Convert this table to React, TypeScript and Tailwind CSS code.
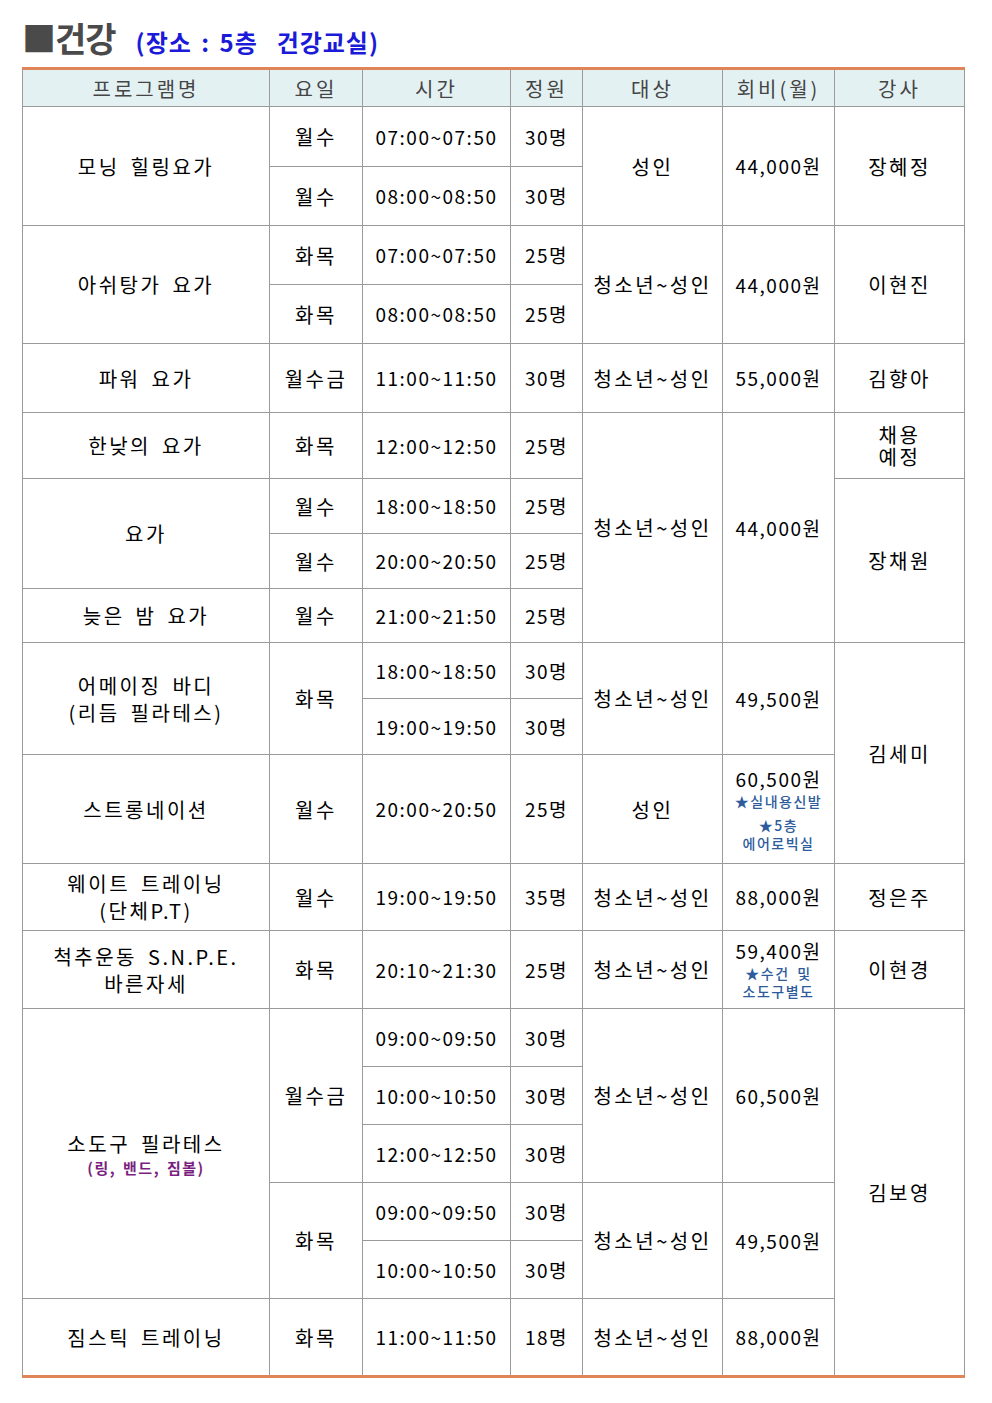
import React from "react";

type Cell = {
  text: React.ReactNode;
  rs?: number;
};

const td = "border border-[#9a9a9a] text-center align-middle px-1 leading-[1.35]";
const ko = "text-[20px] tracking-[2.5px] [word-spacing:4px]";

function Note({ children }: { children: React.ReactNode }) {
  return (
    <div className="text-[14px] leading-[1.3] text-[#2d5b9c] font-medium tracking-[1.5px] [word-spacing:3px]">
      {children}
    </div>
  );
}

const rows: { h: number; cells: Cell[] }[] = [
  {
    h: 60,
    cells: [
      { text: "모닝 힐링요가", rs: 2 },
      { text: "월수" },
      { text: "07:00~07:50" },
      { text: "30명" },
      { text: "성인", rs: 2 },
      { text: "44,000원", rs: 2 },
      { text: "장혜정", rs: 2 },
    ],
  },
  { h: 59, cells: [{ text: "월수" }, { text: "08:00~08:50" }, { text: "30명" }] },
  {
    h: 59,
    cells: [
      { text: "아쉬탕가 요가", rs: 2 },
      { text: "화목" },
      { text: "07:00~07:50" },
      { text: "25명" },
      { text: "청소년~성인", rs: 2 },
      { text: "44,000원", rs: 2 },
      { text: "이현진", rs: 2 },
    ],
  },
  { h: 59, cells: [{ text: "화목" }, { text: "08:00~08:50" }, { text: "25명" }] },
  {
    h: 69,
    cells: [
      { text: "파워 요가" },
      { text: "월수금" },
      { text: "11:00~11:50" },
      { text: "30명" },
      { text: "청소년~성인" },
      { text: "55,000원" },
      { text: "김향아" },
    ],
  },
  {
    h: 66,
    cells: [
      { text: "한낮의 요가" },
      { text: "화목" },
      { text: "12:00~12:50" },
      { text: "25명" },
      { text: "청소년~성인", rs: 4 },
      { text: "44,000원", rs: 4 },
      {
        text: (
          <div className={`${ko} leading-[22px]`}>
            <div>채용</div>
            <div>예정</div>
          </div>
        ),
      },
    ],
  },
  {
    h: 55,
    cells: [
      { text: "요가", rs: 2 },
      { text: "월수" },
      { text: "18:00~18:50" },
      { text: "25명" },
      { text: "장채원", rs: 3 },
    ],
  },
  { h: 55, cells: [{ text: "월수" }, { text: "20:00~20:50" }, { text: "25명" }] },
  { h: 54, cells: [{ text: "늦은 밤 요가" }, { text: "월수" }, { text: "21:00~21:50" }, { text: "25명" }] },
  {
    h: 56,
    cells: [
      { text: <div className={ko}>어메이징 바디<br />(리듬 필라테스)</div>, rs: 2 },
      { text: "화목", rs: 2 },
      { text: "18:00~18:50" },
      { text: "30명" },
      { text: "청소년~성인", rs: 2 },
      { text: "49,500원", rs: 2 },
      { text: "김세미", rs: 3 },
    ],
  },
  { h: 56, cells: [{ text: "19:00~19:50" }, { text: "30명" }] },
  {
    h: 109,
    cells: [
      { text: "스트롱네이션" },
      { text: "월수" },
      { text: "20:00~20:50" },
      { text: "25명" },
      { text: "성인" },
      {
        text: (
          <>
            <div>60,500원</div>
            <Note>★실내용신발</Note>
            <div className="h-[6px]" />
            <Note>★5층</Note>
            <Note>에어로빅실</Note>
          </>
        ),
      },
    ],
  },
  {
    h: 67,
    cells: [
      { text: <div className={ko}>웨이트 트레이닝<br />(단체P.T)</div> },
      { text: "월수" },
      { text: "19:00~19:50" },
      { text: "35명" },
      { text: "청소년~성인" },
      { text: "88,000원" },
      { text: "정은주" },
    ],
  },
  {
    h: 78,
    cells: [
      { text: <div className={ko}>척추운동 S.N.P.E.<br />바른자세</div> },
      { text: "화목" },
      { text: "20:10~21:30" },
      { text: "25명" },
      { text: "청소년~성인" },
      {
        text: (
          <>
            <div>59,400원</div>
            <Note>★수건 및</Note>
            <Note>소도구별도</Note>
          </>
        ),
      },
      { text: "이현경" },
    ],
  },
  {
    h: 58,
    cells: [
      {
        text: (
          <>
            <div className={ko}>소도구 필라테스</div>
            <div className="text-[15px] leading-[1.4] font-bold text-[#7a1f7f] tracking-[1.5px] [word-spacing:2px]">
              (링, 밴드, 짐볼)
            </div>
          </>
        ),
        rs: 5,
      },
      { text: "월수금", rs: 3 },
      { text: "09:00~09:50" },
      { text: "30명" },
      { text: "청소년~성인", rs: 3 },
      { text: "60,500원", rs: 3 },
      { text: "김보영", rs: 6 },
    ],
  },
  { h: 58, cells: [{ text: "10:00~10:50" }, { text: "30명" }] },
  { h: 58, cells: [{ text: "12:00~12:50" }, { text: "30명" }] },
  {
    h: 58,
    cells: [
      { text: "화목", rs: 2 },
      { text: "09:00~09:50" },
      { text: "30명" },
      { text: "청소년~성인", rs: 2 },
      { text: "49,500원", rs: 2 },
    ],
  },
  { h: 58, cells: [{ text: "10:00~10:50" }, { text: "30명" }] },
  {
    h: 78,
    cells: [
      { text: "짐스틱 트레이닝" },
      { text: "화목" },
      { text: "11:00~11:50" },
      { text: "18명" },
      { text: "청소년~성인" },
      { text: "88,000원" },
    ],
  },
];

const heads = ["프로그램명", "요일", "시간", "정원", "대상", "회비(월)", "강사"];

const isKo = (t: React.ReactNode) => typeof t === "string" && !/[0-9]/.test(t);

export default function App() {
  return (
    <div
      className="w-[992px] min-h-[1403px] bg-white pt-[16px] pl-[22px] text-black"
      style={{ fontFamily: '"Noto Sans CJK KR", "Noto Sans", sans-serif' }}
    >
      <h1 className="flex items-baseline gap-[20px] h-[51px]">
        <span className="text-[34px] font-bold text-[#4a4a4a] tracking-[-1px] leading-[44px]">■건강</span>
        <span className="text-[24px] font-bold text-[#1a1ad8] tracking-[1px] [word-spacing:3px]">
          (장소 : 5층 &nbsp;건강교실)
        </span>
      </h1>
      <table className="border-collapse table-fixed w-[942px] border-b-[3px] border-b-[#e0845a] text-[19px] tracking-[1.5px]">
        <colgroup>
          <col className="w-[247px]" />
          <col className="w-[93px]" />
          <col className="w-[148px]" />
          <col className="w-[72px]" />
          <col className="w-[140px]" />
          <col className="w-[112px]" />
          <col className="w-[130px]" />
        </colgroup>
        <thead>
          <tr className="h-[38px] bg-[#e4f1f3]">
            {heads.map((h) => (
              <th
                key={h}
                className={`${td} font-normal text-[#454545] text-[20px] tracking-[3px] border-t-[3px] border-t-[#e0845a]`}
              >
                {h}
              </th>
            ))}
          </tr>
        </thead>
        <tbody>
          {rows.map((r, i) => (
            <tr key={i} style={{ height: r.h }}>
              {r.cells.map((c, j) => (
                <td key={j} rowSpan={c.rs} className={`${td} ${isKo(c.text) ? ko : ""}`}>
                  {c.text}
                </td>
              ))}
            </tr>
          ))}
        </tbody>
      </table>
    </div>
  );
}
